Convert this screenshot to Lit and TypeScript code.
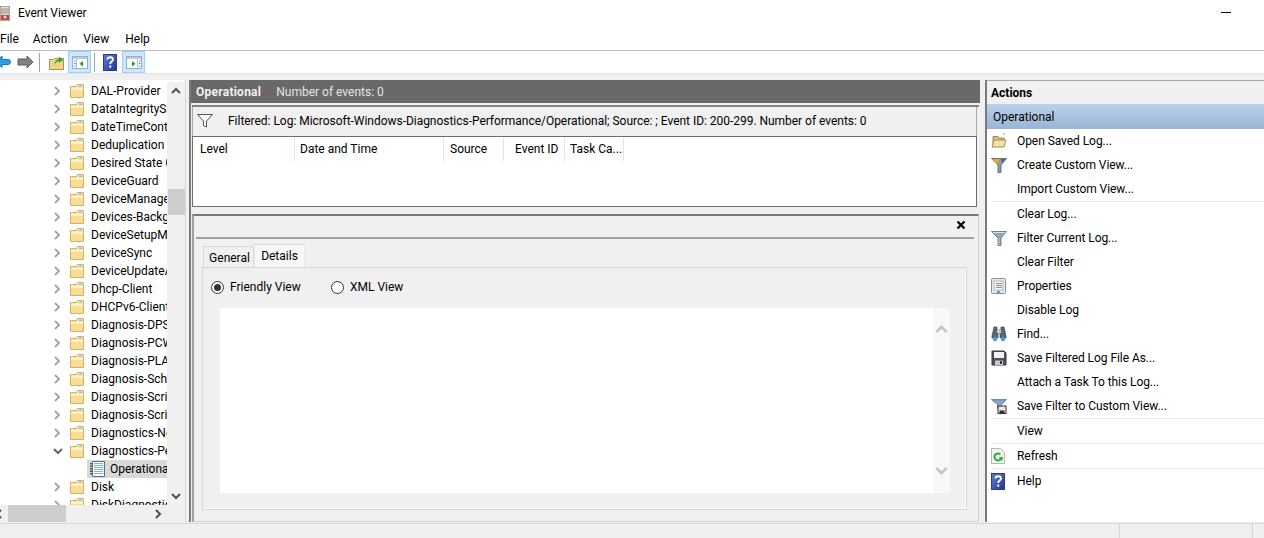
import { LitElement, html, css, svg } from "lit";
import { customElement } from "lit/decorators.js";

const folder = svg`<svg viewBox="0 0 16 16" width="16" height="16"><path d="M1.500 3.500h6l1-2h6v13h-13z" fill="#fbe7ac" stroke="#d2b06a"/><path d="M2 5h12v9H2z" fill="#f9dd94"/><path d="M2 5h12v2H2z" fill="#fdf2cc"/><path d="M10 2.500h3v1.500h-3z" fill="#8ec3e8"/></svg>`;
const logIcon = svg`<svg viewBox="0 0 15 16" width="15" height="16"><path d="M2.500 .5h12v15h-12z" fill="#fbfdff" stroke="#5a7089"/><path d="M4 2.500h9M4 4.500h9M4 6.500h9M4 8.500h9M4 10.500h9M4 12.500h9" stroke="#7fb0e0"/><path d="M1 2v12" stroke="#555" stroke-width="2" stroke-dasharray="1.500 1"/></svg>`;
const help = svg`<svg viewBox="0 0 14 17" width="14" height="17"><defs><linearGradient id="hb" x1="0" y1="0" x2="1" y2="1"><stop offset="0" stop-color="#5f7fd0"/><stop offset="1" stop-color="#23358f"/></linearGradient></defs><rect x=".5" y=".5" width="13" height="16" fill="url(#hb)" stroke="#2b3c8c"/><path d="M4.500 5.500c0-3 5.500-3 5.500 0 0 2-2.800 2-2.800 4.500" fill="none" stroke="#fff" stroke-width="1.800"/><rect x="6.300" y="11.500" width="1.900" height="2.200" fill="#fff"/></svg>`;
const panelIcon = (right: boolean) => svg`<svg viewBox="0 0 16 13" width="16" height="13"><rect x=".5" y=".5" width="15" height="12" fill="#fff" stroke="#a3adb6"/><rect x="1" y="1" width="14" height="2" fill="#c3cad1"/><path d="M${right ? 11.5 : 4.500} 3v9" stroke="#b0bac4"/><path d="M${right ? 13 : 2} 5h1.500M${right ? 13 : 2} 7.500h1.500M${right ? 13 : 2} 10h1.500" stroke="#3c8ed0"/><path d="${right ? "M6 5l3.500 2.750-3.500 2.750z" : "M11 5l-3.500 2.750 3.500 2.750z"}" fill="#19a337"/></svg>`;
const funnel = (c1: string, c2: string) => svg`<path d="M.5 1.500h15l-6 6.500v6l-3-1.500v-4.500z" fill="${c1}" stroke="${c2}"/>`;

const actionIcons: Record<string, unknown> = {
  open: svg`<svg viewBox="0 0 16 16" width="16" height="16"><path d="M12 1h2" stroke="#6cc24a"/><path d="M2 5V3.500h5l1 1.500h5v8H2z" fill="#d8bd7c" stroke="#a08850"/><path d="M1 14l2-7h12l-2 7z" fill="#f3dfa8" stroke="#a98f55"/></svg>`,
  create: svg`<svg viewBox="0 0 16 16" width="16" height="16"><path d="M.5 1.500h15l-5.500 6.500v7.500h-3v-7.500z" fill="#8e9eab" stroke="#66727c"/><path d="M1 2h8l-3.500 5z" fill="#f5a623"/><path d="M10 2h5l-4 4z" fill="#55697a"/></svg>`,
  filter: svg`<svg viewBox="0 0 16 16" width="16" height="16"><path d="M.5 1.500h15l-5.500 6.500v7.500h-3v-7.500z" fill="#8fa6b8" stroke="#6d8395"/><path d="M2 2.500h12" stroke="#d7e2ea"/><path d="M8 8v7" stroke="#b8c7d3"/></svg>`,
  props: svg`<svg viewBox="0 0 16 16" width="16" height="16"><rect x=".5" y=".5" width="14" height="15" rx="1" fill="#e6e8ea" stroke="#8b9096"/><rect x="3" y="3" width="9" height="9" fill="#f7f7f7" stroke="#b5b9bd"/><path d="M5 5.500h6M5 7.500h6M5 9.500h6" stroke="#8b9096"/><path d="M6 14h3" stroke="#3ea6e4" stroke-width="2"/></svg>`,
  find: svg`<svg viewBox="0 0 16 16" width="16" height="16"><path d="M3 1h3v3h4V1h3l2 9v2H9V7H7v5H1v-2z" fill="#5c6670" stroke="#3c444c" stroke-width=".7"/><rect x="6" y="4" width="4" height="3" fill="#c9ced3"/><circle cx="4" cy="13" r="2.200" fill="#4a9be0"/><circle cx="12" cy="13" r="2.200" fill="#4a9be0"/></svg>`,
  save: svg`<svg viewBox="0 0 16 16" width="16" height="16"><path d="M1 1h12l2 2v12H1z" fill="#4c5258" stroke="#33383d"/><rect x="3" y="2" width="10" height="6" fill="#f4f4f4"/><rect x="4" y="10.500" width="8" height="4.500" fill="#c9ccce"/><rect x="9" y="11" width="2" height="3" fill="#33383d"/></svg>`,
  savef: svg`<svg viewBox="0 0 16 16" width="16" height="16"><path d="M.5 1.500h15l-5 5v4h-4v-4z" fill="#8ea6b8" stroke="#6d8395"/><path d="M1 2h14" stroke="#5ea0cf"/><rect x="7" y="8" width="8" height="7.500" fill="#e8e8e8" stroke="#333"/><rect x="8.500" y="12.500" width="5" height="3" fill="#333"/></svg>`,
  refresh: svg`<svg viewBox="0 0 14 16" width="14" height="16"><path d="M.5 .5h9l4 4v11H.5z" fill="#f1f3f1" stroke="#b5bab5"/><path d="M10.500 9a3.500 3.500 0 1 1-1.200-2.700" fill="none" stroke="#2eae3a" stroke-width="2"/><path d="M7.500 9.500l3.500 3.500 1-4z" fill="#2eae3a"/></svg>`,
  help,
};

const treeItems = ["DAL-Provider", "DataIntegrityScan", "DateTimeControl", "Deduplication", "Desired State Configuration", "DeviceGuard", "DeviceManagement", "Devices-Background", "DeviceSetupManager", "DeviceSync", "DeviceUpdateAgent", "Dhcp-Client", "DHCPv6-Client", "Diagnosis-DPS", "Diagnosis-PCW", "Diagnosis-PLA", "Diagnosis-Scheduled", "Diagnosis-Scripted", "Diagnosis-Scripted", "Diagnostics-Networking", "Diagnostics-Performance"];

type Act = { t: string; i?: string; sep?: boolean };
const actions: Act[] = [
  { t: "Open Saved Log...", i: "open" },
  { t: "Create Custom View...", i: "create" },
  { t: "Import Custom View...", sep: true },
  { t: "Clear Log..." },
  { t: "Filter Current Log...", i: "filter" },
  { t: "Clear Filter" },
  { t: "Properties", i: "props" },
  { t: "Disable Log" },
  { t: "Find...", i: "find" },
  { t: "Save Filtered Log File As...", i: "save" },
  { t: "Attach a Task To this Log..." },
  { t: "Save Filter to Custom View...", i: "savef", sep: true },
  { t: "View", sep: true },
  { t: "Refresh", i: "refresh", sep: true },
  { t: "Help", i: "help" },
];

const columns: [string, number, number][] = [["Level", 102, 7], ["Date and Time", 149, 5], ["Source", 60, 6], ["Event ID", 61, 11], ["Task Ca...", 59, 5]];

const chev = (d: "r" | "d" | "l" | "u", c = "#a6a6a6") => {
  const p = { r: "M2 1l4 4-4 4", l: "M6 1L2 5l4 4", d: "M1 3l4 4 4-4", u: "M1 7l4-4 4 4" }[d];
  return svg`<svg viewBox="0 0 10 10" width="10" height="10"><path d="${p}" fill="none" stroke="${c}" stroke-width="2"/></svg>`;
};

@customElement("app-root")
export class AppRoot extends LitElement {
  static styles = css`
    :host { display: block; width: 1264px; height: 538px; overflow: hidden; background: #f0f0f0; color: #000; font: 12px/16px Roboto, sans-serif; }
    .title { height: 26px; background: #fff; display: flex; align-items: center; position: relative; }
    .appicon { width: 10px; height: 15px; margin-right: 8px; display: block; }
    .min { position: absolute; left: 1221px; top: 12px; width: 10px; height: 1px; background: #000; }
    .menu { padding-top: 1px; box-sizing: border-box; height: 25px; background: #fff; display: flex; align-items: center; border-bottom: 1px solid #bcbcbc; }
    .menu span { display: block; }
    .mfile { margin-right: 14px; }
    .mact { margin-right: 16px; }
    .tools { height: 22px; background: #fff; display: flex; align-items: center; border-bottom: 1px solid #e4e4e4; }
    .tools > * { flex: none; }
    .sep { width: 1px; height: 19px; background: #a0a0a0; }
    .hl { width: 23px; height: 22px; box-sizing: border-box; background: #cce8ff; border: 1px solid #99d1ff; display: flex; align-items: center; justify-content: center; }
    .helpbtn { display: flex; margin-left: 8px; }
    .fwd { margin-left: 6px; }
    .s1 { margin-left: 5px; }
    .up { margin-left: 9px; }
    .hl1 { margin-left: 4px; }
    .s2 { margin-left: 3px; }
    .hl2 { margin-left: 5px; }
    .body { display: flex; height: 442px; padding-top: 6px; }
    .left { width: 186px; height: 442px; flex: none; background: #fff; border-right: 1px solid #d9d9d9; box-sizing: border-box; display: flex; flex-direction: column; }
    .treewrap { flex: 1; display: flex; min-height: 0; }
    .tree { width: 167px; overflow: hidden; flex: none; padding-top: 2px; }
    .row { height: 18px; display: flex; align-items: center; white-space: nowrap; overflow: hidden; }
    .row .ch { width: 10px; margin-left: 53px; margin-right: 6px; display: flex; flex: none; }
    .row .f { margin-right: 6px; display: flex; flex: none; }
    .row.sel { margin-left: 87px; background: #d9d9d9; padding-left: 3px; }
    .row.sel .lg { display: flex; margin-right: 5px; flex: none; }
    .vs { width: 18px; margin-top: 2px; background: #f0f0f0; display: flex; flex-direction: column; align-items: center; flex: none; }
    .vs .sp { height: 89px; flex: none; }
    .vs .th { height: 26px; width: 17px; background: #cdcdcd; flex: none; }
    .vs .sp2 { flex: 1; }
    .vs .a { height: 18px; display: flex; align-items: center; justify-content: center; flex: none; }
    .hs { height: 17px; background: #f0f0f0; display: flex; align-items: center; flex: none; }
    .hs .hl-l { display: flex; margin-left: -5px; }
    .hs .th { width: 58px; height: 17px; background: #cdcdcd; margin-left: 3px; }
    .hs .fill { flex: 1; }
    .hs .r { width: 31px; display: flex; }
    .center { width: 791px; flex: none; margin-left: 3px; height: 442px; border-left: 2px solid #7b7b7b; box-sizing: border-box; }
    .chead { height: 23px; box-sizing: border-box; padding-top: 1px; background: #696969; color: #f0f0f0; display: flex; align-items: center; padding-left: 5px; }
    .chead b { font-weight: 700; margin-right: 15px; letter-spacing: 0.25px; }
    .chead span { color: #e4e4e4; }
    .cpanel { margin-left: 1px; margin-right: 1px; margin-top: 2px; border-top: 2px solid #838383; }
    .fbar { height: 29px; display: flex; align-items: center; padding-left: 4px; box-sizing: border-box; padding-bottom: 2px; border-left: 1px solid #a8a8a8; margin-right: 2px; border-right: 1px solid #a8a8a8; letter-spacing: -0.03px; white-space: nowrap; }
    .fbar svg { margin-right: 15px; flex: none; }
    .list { height: 71px; box-sizing: border-box; margin-right: 2px; background: #fff; border: 1px solid #6e6e6e; display: flex; align-items: flex-start; }
    .col { height: 24px; display: flex; align-items: center; box-sizing: border-box; border-right: 1px solid #e5e5e5; flex: none; white-space: nowrap; }
    .detail { margin-top: 7px; height: 308px; box-sizing: border-box; border-top: 2px solid #7a7a7a; border-left: 2px solid #a0a0a0; border-right: 1px solid #d4d4d4; border-bottom: 1px solid #d4d4d4; }
    .dtop { height: 21px; box-sizing: border-box; display: flex; justify-content: flex-end; align-items: center; padding-right: 12px; padding-bottom: 3px; }
    .rule { height: 2px; background: #a0a0a0; margin: 0 4px 0 2px; }
    .tabs { display: flex; align-items: flex-end; height: 28px; margin-left: 9px; }
    .tab { height: 21px; box-sizing: border-box; width: 51px; padding-top: 1px; padding-left: 2px; border: 1px solid #d9d9d9; border-bottom: none; display: flex; align-items: center; justify-content: center; }
    .tab.on { height: 23px; padding-top: 0; padding-left: 0; padding-bottom: 1px; background: #f7f7f7; border-color: #e8e8e8; border-top-color: #d9d9d9; }
    .tabbody { margin-left: 8px; width: 765px; height: 243px; box-sizing: border-box; border: 1px solid #d6d6d6; box-shadow: inset -1px -1px 0 #fff; padding: 0 16px 0 8px; }
    .radios { height: 38px; display: flex; align-items: center; }
    .radio { width: 13px; height: 13px; box-sizing: border-box; border: 1px solid #333; border-radius: 50%; background: #fff; display: flex; align-items: center; justify-content: center; margin-right: 6px; flex: none; }
    .radio i { width: 7px; height: 7px; background: #333; border-radius: 50%; display: block; }
    .rl { width: 101px; }
    .text { margin-left: 9px; margin-top: 2px; width: 730px; height: 185px; background: #fff; display: flex; justify-content: flex-end; }
    .tsb { width: 17px; background: #f8f8f8; display: flex; flex-direction: column; justify-content: space-between; align-items: center; padding: 15px 0 16px; box-sizing: border-box; }
    .tsb svg { width: 13px; height: 13px; }
    .right { flex: 1; margin-left: 5px; height: 442px; box-sizing: border-box; border-left: 2px solid #7b7b7b; background: #fff; letter-spacing: -0.06px; }
    .rh { height: 24px; background: #f0f0f0; display: flex; align-items: center; padding-left: 4px; padding-top: 1px; font-weight: 700; border-top: 1px solid #a8a8a8; box-sizing: border-box; letter-spacing: 0; }
    .rsel { height: 25px; display: flex; align-items: center; padding-left: 6px; background: linear-gradient(#bad2ea, #99b5d5); letter-spacing: 0; }
    .act { height: 24px; display: flex; align-items: center; position: relative; padding-left: 30px; white-space: nowrap; }
    .act .ai { position: absolute; left: 4px; top: 4px; display: flex; }
    .divider { height: 1px; background: #e8e8e8; margin-left: 4px; }
    .status { height: 15px; border-top: 1px solid #d6d6d6; display: flex; box-sizing: border-box; margin-top: 1px; }
    .status div { border-right: 1px solid #d6d6d6; height: 14px; flex: none; }
    .st1 { width: 1119px; }
    .st2 { width: 132px; }
  `;

  render() {
    return html`
      <div class="title">
        <svg class="appicon" viewBox="0 0 10 15"><rect width="10" height="15" fill="#e9dcc0" stroke="#7d7463"/><path d="M1 3h8M1 5h8M1 7h8" stroke="#8b8fa0"/><rect x="1" y="9" width="8" height="5" fill="#b4485a"/><circle cx="5" cy="11" r="1.500" fill="#f3e3a0"/></svg>
        <span>Event Viewer</span>
        <div class="min"></div>
      </div>
      <div class="menu">
        <span class="mfile">File</span><span class="mact">Action</span><span class="mact">View</span><span>Help</span>
      </div>
      <div class="tools">
        <svg viewBox="0 0 11 14" width="11" height="14"><path d="M-4 7l6-6v3.500h6a2.500 2.500 0 0 1 0 5H2v3z" fill="#2b9fe6" stroke="#1c6fb0"/></svg>
        <svg class="fwd" viewBox="0 0 17 14" width="17" height="14"><path d="M16 7l-6-6v3H1v6h9v3z" fill="#808080" stroke="#5c5c5c"/></svg>
        <div class="sep s1"></div>
        <svg class="up" viewBox="0 0 15 15" width="15" height="15"><path d="M.5 4.500h4l1-1h9v11H.5z" fill="#edd58e" stroke="#a98f50"/><path d="M5 10q1-5 5-6V1.500l4 3.500-4 3V6q-3 .5-5 4z" fill="#37a52e"/></svg>
        <div class="hl hl1">${panelIcon(false)}</div>
        <div class="sep s2"></div>
        <div class="helpbtn">${help}</div>
        <div class="hl hl2">${panelIcon(true)}</div>
      </div>
      <div class="body">
        <div class="left">
          <div class="treewrap">
            <div class="tree">
              ${treeItems.map((t, i) => html`<div class="row"><span class="ch">${chev(i === 20 ? "d" : "r", i === 20 ? "#666" : "#a6a6a6")}</span><span class="f">${folder}</span><span>${t}</span></div>`)}
              <div class="row sel"><span class="lg">${logIcon}</span><span>Operational</span></div>
              <div class="row"><span class="ch">${chev("r")}</span><span class="f">${folder}</span><span>Disk</span></div>
              <div class="row"><span class="ch">${chev("r")}</span><span class="f">${folder}</span><span>DiskDiagnostic</span></div>
            </div>
            <div class="vs">
              <div class="a">${chev("u", "#505050")}</div>
              <div class="sp"></div>
              <div class="th"></div>
              <div class="sp2"></div>
              <div class="a">${chev("d", "#505050")}</div>
            </div>
          </div>
          <div class="hs">
            <div class="hl-l">${chev("l", "#505050")}</div>
            <div class="th"></div>
            <div class="fill"></div>
            <div class="r">${chev("r", "#505050")}</div>
          </div>
        </div>
        <div class="center">
          <div class="chead"><b>Operational</b><span>Number of events: 0</span></div>
          <div class="cpanel">
            <div class="fbar">
              <svg viewBox="0 0 16 16" width="16" height="16">${funnel("#fff", "#555")}</svg>
              <span>Filtered: Log: Microsoft-Windows-Diagnostics-Performance/Operational; Source: ; Event ID: 200-299. Number of events: 0</span>
            </div>
            <div class="list">
              ${columns.map(([c, w, p]) => html`<div class="col" style="width:${w}px;padding-left:${p}px">${c}</div>`)}
            </div>
            <div class="detail">
              <div class="dtop"><svg viewBox="0 0 10 10" width="10" height="10"><path d="M1.500 1.500l7 7M8.500 1.500l-7 7" stroke="#000" stroke-width="2.200"/></svg></div>
              <div class="rule"></div>
              <div class="tabs">
                <div class="tab">General</div>
                <div class="tab on">Details</div>
              </div>
              <div class="tabbody">
                <div class="radios">
                  <span class="radio"><i></i></span><span class="rl">Friendly View</span>
                  <span class="radio"></span><span>XML View</span>
                </div>
                <div class="text">
                  <div class="tsb">${chev("u", "#c4c4c4")}${chev("d", "#c4c4c4")}</div>
                </div>
              </div>
            </div>
          </div>
        </div>
        <div class="right">
          <div class="rh">Actions</div>
          <div class="rsel">Operational</div>
          ${actions.map((a) => html`
            <div class="act">${a.i ? html`<span class="ai">${actionIcons[a.i]}</span>` : ""}${a.t}</div>
            ${a.sep ? html`<div class="divider"></div>` : ""}
          `)}
        </div>
      </div>
      <div class="status"><div class="st1"></div><div class="st2"></div></div>
    `;
  }
}
